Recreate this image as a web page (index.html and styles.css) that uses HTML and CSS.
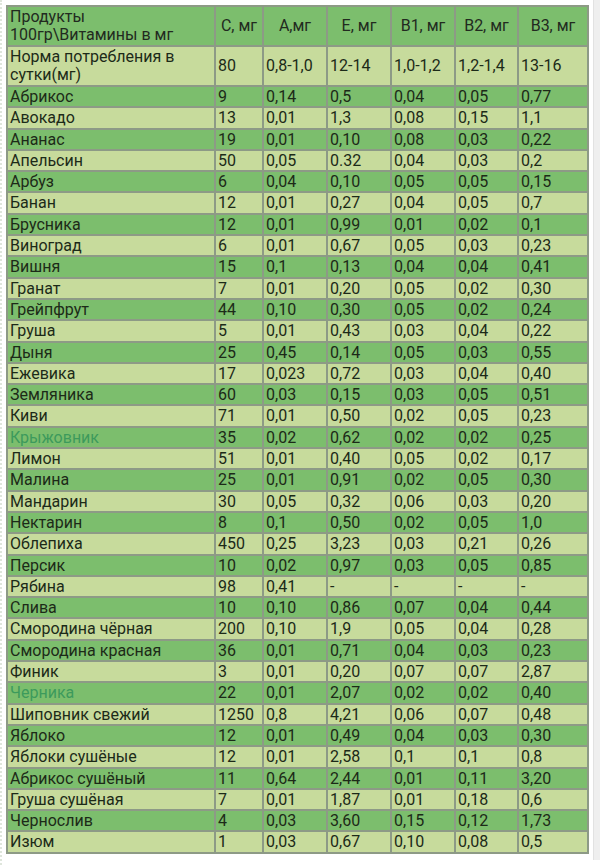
FILE: index.html
```html
<!DOCTYPE html>
<html lang="ru">
<head>
<meta charset="utf-8">
<link rel="stylesheet" href="styles.css">
</head>
<body>
<div class="page">
<table class="vit">
<colgroup>
<col class="c-name"><col class="c-c"><col class="c-a"><col class="c-e"><col class="c-b1"><col class="c-b2"><col class="c-b3">
</colgroup>
<tr class="head"><td class="hname">Продукты 100гр\Витамины в мг</td><th>С, мг</th><th>А,мг</th><th>Е, мг</th><th>В1, мг</th><th>В2, мг</th><th>В3, мг</th></tr>
<tr class="norm"><td>Норма потребления в сутки(мг)</td><td>80</td><td>0,8-1,0</td><td>12-14</td><td>1,0-1,2</td><td>1,2-1,4</td><td>13-16</td></tr>
<tr><td>Абрикос</td><td>9</td><td>0,14</td><td>0,5</td><td>0,04</td><td>0,05</td><td>0,77</td></tr>
<tr><td>Авокадо</td><td>13</td><td>0,01</td><td>1,3</td><td>0,08</td><td>0,15</td><td>1,1</td></tr>
<tr><td>Ананас</td><td>19</td><td>0,01</td><td>0,10</td><td>0,08</td><td>0,03</td><td>0,22</td></tr>
<tr><td>Апельсин</td><td>50</td><td>0,05</td><td>0.32</td><td>0,04</td><td>0,03</td><td>0,2</td></tr>
<tr><td>Арбуз</td><td>6</td><td>0,04</td><td>0,10</td><td>0,05</td><td>0,05</td><td>0,15</td></tr>
<tr><td>Банан</td><td>12</td><td>0,01</td><td>0,27</td><td>0,04</td><td>0,05</td><td>0,7</td></tr>
<tr><td>Брусника</td><td>12</td><td>0,01</td><td>0,99</td><td>0,01</td><td>0,02</td><td>0,1</td></tr>
<tr><td>Виноград</td><td>6</td><td>0,01</td><td>0,67</td><td>0,05</td><td>0,03</td><td>0,23</td></tr>
<tr><td>Вишня</td><td>15</td><td>0,1</td><td>0,13</td><td>0,04</td><td>0,04</td><td>0,41</td></tr>
<tr><td>Гранат</td><td>7</td><td>0,01</td><td>0,20</td><td>0,05</td><td>0,02</td><td>0,30</td></tr>
<tr><td>Грейпфрут</td><td>44</td><td>0,10</td><td>0,30</td><td>0,05</td><td>0,02</td><td>0,24</td></tr>
<tr><td>Груша</td><td>5</td><td>0,01</td><td>0,43</td><td>0,03</td><td>0,04</td><td>0,22</td></tr>
<tr><td>Дыня</td><td>25</td><td>0,45</td><td>0,14</td><td>0,05</td><td>0,03</td><td>0,55</td></tr>
<tr><td>Ежевика</td><td>17</td><td>0,023</td><td>0,72</td><td>0,03</td><td>0,04</td><td>0,40</td></tr>
<tr><td>Земляника</td><td>60</td><td>0,03</td><td>0,15</td><td>0,03</td><td>0,05</td><td>0,51</td></tr>
<tr><td>Киви</td><td>71</td><td>0,01</td><td>0,50</td><td>0,02</td><td>0,05</td><td>0,23</td></tr>
<tr><td><span class="link">Крыжовник</span></td><td>35</td><td>0,02</td><td>0,62</td><td>0,02</td><td>0,02</td><td>0,25</td></tr>
<tr><td>Лимон</td><td>51</td><td>0,01</td><td>0,40</td><td>0,05</td><td>0,02</td><td>0,17</td></tr>
<tr><td>Малина</td><td>25</td><td>0,01</td><td>0,91</td><td>0,02</td><td>0,05</td><td>0,30</td></tr>
<tr><td>Мандарин</td><td>30</td><td>0,05</td><td>0,32</td><td>0,06</td><td>0,03</td><td>0,20</td></tr>
<tr><td>Нектарин</td><td>8</td><td>0,1</td><td>0,50</td><td>0,02</td><td>0,05</td><td>1,0</td></tr>
<tr><td>Облепиха</td><td>450</td><td>0,25</td><td>3,23</td><td>0,03</td><td>0,21</td><td>0,26</td></tr>
<tr><td>Персик</td><td>10</td><td>0,02</td><td>0,97</td><td>0,03</td><td>0,05</td><td>0,85</td></tr>
<tr><td>Рябина</td><td>98</td><td>0,41</td><td>-</td><td>-</td><td>-</td><td>-</td></tr>
<tr><td>Слива</td><td>10</td><td>0,10</td><td>0,86</td><td>0,07</td><td>0,04</td><td>0,44</td></tr>
<tr><td>Смородина чёрная</td><td>200</td><td>0,10</td><td>1,9</td><td>0,05</td><td>0,04</td><td>0,28</td></tr>
<tr><td>Смородина красная</td><td>36</td><td>0,01</td><td>0,71</td><td>0,04</td><td>0,03</td><td>0,23</td></tr>
<tr><td>Финик</td><td>3</td><td>0,01</td><td>0,20</td><td>0,07</td><td>0,07</td><td>2,87</td></tr>
<tr><td><span class="link">Черника</span></td><td>22</td><td>0,01</td><td>2,07</td><td>0,02</td><td>0,02</td><td>0,40</td></tr>
<tr><td>Шиповник свежий</td><td>1250</td><td>0,8</td><td>4,21</td><td>0,06</td><td>0,07</td><td>0,48</td></tr>
<tr><td>Яблоко</td><td>12</td><td>0,01</td><td>0,49</td><td>0,04</td><td>0,03</td><td>0,30</td></tr>
<tr><td>Яблоки сушёные</td><td>12</td><td>0,01</td><td>2,58</td><td>0,1</td><td>0,1</td><td>0,8</td></tr>
<tr><td>Абрикос сушёный</td><td>11</td><td>0,64</td><td>2,44</td><td>0,01</td><td>0,11</td><td>3,20</td></tr>
<tr><td>Груша сушёная</td><td>7</td><td>0,01</td><td>1,87</td><td>0,01</td><td>0,18</td><td>0,6</td></tr>
<tr><td>Чернослив</td><td>4</td><td>0,03</td><td>3,60</td><td>0,15</td><td>0,12</td><td>1,73</td></tr>
<tr><td>Изюм</td><td>1</td><td>0,03</td><td>0,67</td><td>0,10</td><td>0,08</td><td>0,5</td></tr>
</table>
<div class="strip"></div>
</div>
</body>
</html>
```
FILE: styles.css
```css
html, body {
  margin: 0;
  padding: 0;
  background: #ffffff;
}
.page {
  display: flex;
  align-items: flex-start;
  height: 865px;
  padding: 5px 0 0 4px;
  box-sizing: border-box;
  border-left: 2px dotted #dfe6dc;
  gap: 4px;
}
.vit {
  border-collapse: collapse;
  table-layout: fixed;
  width: 581px;
  font-family: Roboto, "Noto Sans", sans-serif;
  font-size: 16px;
  color: #1c2a18;
  flex: none;
}
.c-name { width: 208px; }
.c-c { width: 48px; }
.c-a { width: 64px; }
.c-e { width: 64px; }
.c-b1 { width: 64px; }
.c-b2 { width: 63px; }
.c-b3 { width: 70px; }
.vit td, .vit th {
  border: 2px solid #8d9a86;
  padding: 0 2px;
  line-height: 19.3px;
  height: 19.3px;
  text-align: left;
  vertical-align: middle;
  font-weight: normal;
  white-space: nowrap;
  overflow: hidden;
}
.vit tr:nth-child(odd) { background: #7cbe6d; }
.vit tr:nth-child(even) { background: #c7db9c; }
.vit .head th {
  text-align: center;
  color: #222a20;
}
.vit .head td, .vit .norm td:first-child {
  white-space: normal;
  line-height: 18px;
  padding-top: 1px;
  padding-bottom: 1px;
}
.vit .head td { color: #222a20; }
.link { color: #3c9a5c; }
.strip {
  flex: none;
  width: 11px;
  height: 100%;
  margin-top: -5px;
  background: #efefef;
  border-left: 1px solid #e2e2e2;
}
```
